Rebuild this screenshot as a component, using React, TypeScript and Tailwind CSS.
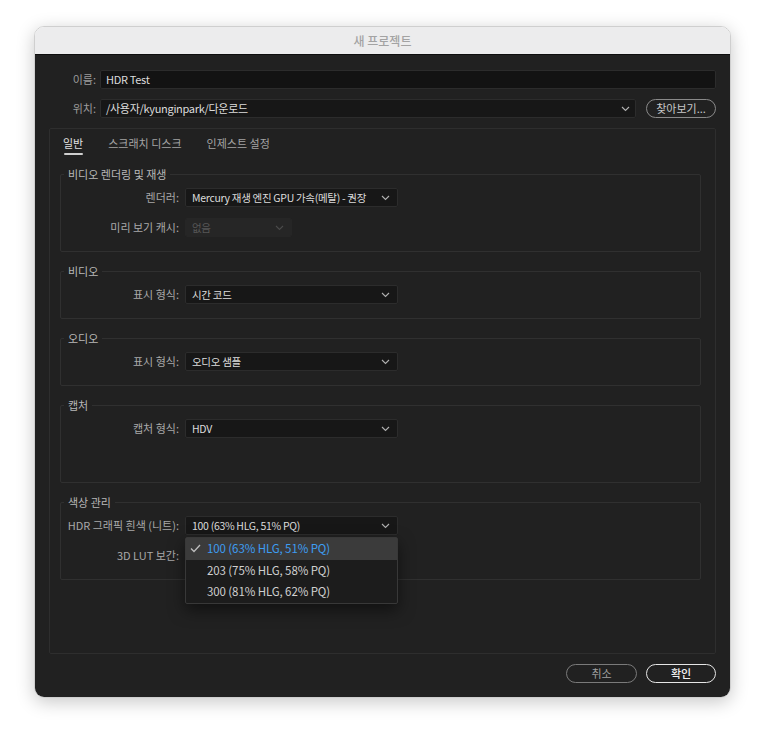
import React from "react";

const font = { fontFamily: '"Noto Sans CJK KR", "Noto Sans", sans-serif' };

function Chevron({ className = "" }: { className?: string }) {
  return (
    <svg width="9" height="6" viewBox="0 0 9 6" className={className}>
      <polyline points="1,1 4.5,4.5 8,1" fill="none" stroke="currentColor" strokeWidth="1.1" />
    </svg>
  );
}

function Select({ value, width = "w-[213px]", disabled = false }: { value: string; width?: string; disabled?: boolean }) {
  return (
    <div
      className={`${width} h-[19px] flex items-center justify-between pl-[6px] pr-[7px] rounded-[2px] border ${
        disabled ? "bg-[#262626] border-[#262626] text-[#565656]" : "bg-[#171717] border-[#2c2c2c] text-[#dcdcdc]"
      }`}
    >
      <span className="whitespace-nowrap text-[10.5px] tracking-[-0.3px]">{value}</span>
      <Chevron className={disabled ? "text-[#4a4a4a]" : "text-[#b0b0b0]"} />
    </div>
  );
}

function Row({ label, children }: { label: string; children: React.ReactNode }) {
  return (
    <div className="flex items-center h-[19px] gap-[6px]">
      <div className="w-[118px] text-right text-[#a9a9a9] whitespace-nowrap">{label}</div>
      {children}
    </div>
  );
}

function Group({ title, children, pb = "pb-[14px]" }: { title: string; children: React.ReactNode; pb?: string }) {
  return (
    <fieldset className={`border border-[#303030] rounded-[2px] ${pb}`}>
      <legend className="ml-[3px] px-[4px] h-[14px] leading-[14px] text-[#b8b8b8]">{title}</legend>
      <div className="pt-[7px] flex flex-col gap-[11px]">{children}</div>
    </fieldset>
  );
}

export default function App() {
  const options = ["100 (63% HLG, 51% PQ)", "203 (75% HLG, 58% PQ)", "300 (81% HLG, 62% PQ)"];

  return (
    <div className="w-[765px] h-[740px] bg-white pt-[26px] pl-[34px]" style={font}>
      <div className="w-[697px] h-[672px] rounded-[10px] overflow-hidden flex flex-col shadow-[0_4px_18px_rgba(0,0,0,0.22)] border border-[#cfcfcf] text-[11px]">
        <div className="h-[28px] bg-[#ececed] border-b border-[#0e0e0e] flex items-center justify-center text-[12px] font-medium text-[#a3a3a3]">
          새 프로젝트
        </div>
        <div className="flex-1 bg-[#212121] px-[14px] pt-[15px] pb-[14px] flex flex-col">
          <div className="flex items-center h-[19px] gap-[4px]">
            <div className="w-[47px] text-right text-[#9c9c9c]">이름:</div>
            <div className="flex-1 h-[19px] bg-[#131313] border border-[#2c2c2c] rounded-[2px] pl-[5px] flex items-center text-[#dcdcdc] tracking-[-0.3px]">
              HDR Test
            </div>
          </div>
          <div className="flex items-center h-[19px] gap-[4px] mt-[10px]">
            <div className="w-[47px] text-right text-[#9c9c9c]">위치:</div>
            <div className="flex-1 h-[19px] bg-[#171717] border border-[#2c2c2c] rounded-[2px] pl-[5px] pr-[5px] flex items-center justify-between text-[#dcdcdc]">
              <span className="tracking-[-0.3px]">/사용자/kyunginpark/다운로드</span>
              <Chevron className="text-[#b0b0b0]" />
            </div>
            <button className="ml-[6px] w-[70px] h-[19px] rounded-full border-[1.5px] border-[#8a8a8a] text-[#c8c8c8] flex items-center justify-center">
              찾아보기...
            </button>
          </div>

          <div className="mt-[10px] flex-1 border border-[#2e2e2e] rounded-[2px] pl-[10px] pr-[14px] pt-[6px] flex flex-col">
            <div className="flex gap-[25px] pl-[3px] h-[20px] text-[#a4a4a4]">
              <div className="flex flex-col items-center">
                <span className="text-[#e2e2e2] leading-[16px]">일반</span>
                <div className="mt-[2px] h-[2px] w-[19px] bg-[#cfcfcf] rounded" />
              </div>
              <span className="leading-[16px]">스크래치 디스크</span>
              <span className="leading-[16px]">인제스트 설정</span>
            </div>

            <div className="mt-[12px] flex flex-col gap-[12px]">
              <Group title="비디오 렌더링 및 재생">
                <Row label="렌더러:">
                  <Select value="Mercury 재생 엔진 GPU 가속(메탈) - 권장" />
                </Row>
                <Row label="미리 보기 캐시:">
                  <Select value="없음" width="w-[107px]" disabled />
                </Row>
              </Group>
              <Group title="비디오">
                <Row label="표시 형식:">
                  <Select value="시간 코드" />
                </Row>
              </Group>
              <Group title="오디오">
                <Row label="표시 형식:">
                  <Select value="오디오 샘플" />
                </Row>
              </Group>
              <Group title="캡처" pb="pb-[44px]">
                <Row label="캡처 형식:">
                  <Select value="HDV" />
                </Row>
              </Group>
              <Group title="색상 관리">
                <Row label="HDR 그래픽 흰색 (니트):">
                  <div className="relative">
                    <Select value="100 (63% HLG, 51% PQ)" />
                    <div className="absolute left-0 top-[21px] w-[213px] bg-[#1c1c1c] border border-[#383838] rounded-[2px] shadow-[0_6px_16px_rgba(0,0,0,0.5)] z-10 text-[11.5px]">
                      {options.map((o, i) => (
                        <div
                          key={o}
                          className={`h-[21.5px] flex items-center ${i === 0 ? "bg-[#3b3b3b] text-[#3d9df2]" : "text-[#cfcfcf]"}`}
                        >
                          <span className="w-[21px] flex justify-start pl-[4px]">
                            {i === 0 && (
                              <svg width="11" height="9" viewBox="0 0 11 9">
                                <polyline points="1,4.5 4,7.5 10,1" fill="none" stroke="#bdbdbd" strokeWidth="1.3" />
                              </svg>
                            )}
                          </span>
                          <span className="tracking-[-0.1px]">{o}</span>
                        </div>
                      ))}
                    </div>
                  </div>
                </Row>
                <Row label="3D LUT 보간:">
                  <div />
                </Row>
              </Group>
            </div>
          </div>

          <div className="mt-[10px] flex justify-end gap-[9px]">
            <button className="w-[71px] h-[19px] rounded-full border-[1.5px] border-[#7a7a7a] text-[#a0a0a0] flex items-center justify-center">
              취소
            </button>
            <button className="w-[70px] h-[19px] rounded-full border-[1.5px] border-[#e6e6e6] text-[#f2f2f2] font-medium flex items-center justify-center">
              확인
            </button>
          </div>
        </div>
      </div>
    </div>
  );
}
